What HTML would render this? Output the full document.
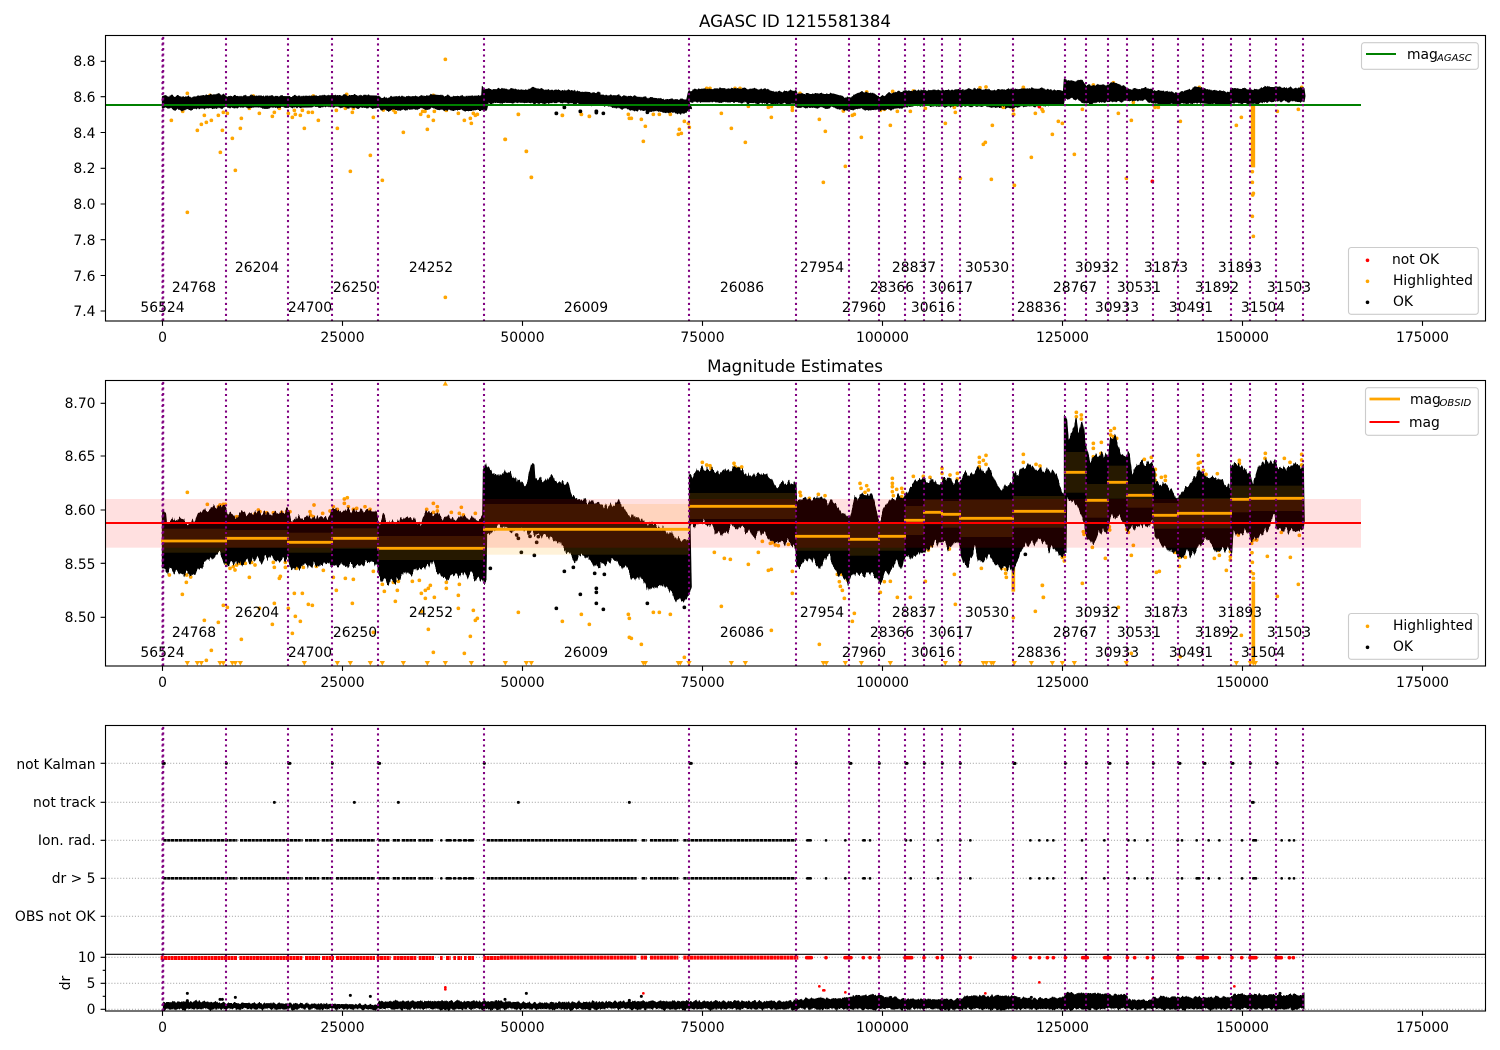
<!DOCTYPE html>
<html>
<head>
<meta charset="utf-8">
<style>
html,body{margin:0;padding:0;background:#fff;width:1500px;height:1050px;overflow:hidden}
svg{display:block}
text{font-family:"DejaVu Sans","Liberation Sans",sans-serif;font-size:13.89px;fill:#000}
.t{font-size:16.67px;text-anchor:middle}
.e{text-anchor:end}
.m{text-anchor:middle}
.sub{font-size:10px;font-style:italic}
.o{fill:none;stroke:orange;stroke-width:11;stroke-linecap:round}
.k{fill:none;stroke:#000;stroke-width:11;stroke-linecap:round}
.r{fill:none;stroke:#f00;stroke-width:11;stroke-linecap:round}
.b{fill:#000;stroke:#000;stroke-width:3;stroke-linejoin:round}
.sp{fill:none;stroke:#000;stroke-width:1.11}
.tk{fill:none;stroke:#000;stroke-width:1.11}
.g{fill:none;stroke:#b0b0b0;stroke-width:1.11;stroke-dasharray:1.11 1.83}
.v{fill:none;stroke:#800080;stroke-width:2.08;stroke-dasharray:2.08 3.44}
.lg{fill:#fff;fill-opacity:.8;stroke:#ccc;stroke-width:1.11}
.row{fill:none;stroke:#000;stroke-width:8;stroke-dasharray:10 1.5}
.pt{fill:none;stroke:#000;stroke-width:8;stroke-linecap:round}
.rrow{fill:none;stroke:#f00;stroke-width:12;stroke-dasharray:9 1}
.tri{fill:orange}
</style>
</head>
<body>
<svg width="1500" height="1050" viewBox="0 0 1500 1050" xmlns="http://www.w3.org/2000/svg">
<rect width="1500" height="1050" fill="#fff"/>
<defs>
<path id="vl" class="v" d="M162.5 286V0M163.2 285V0M226 286V0M288 286V0M332 286V0M378 286V0M484 286V0M689 286V0M796 286V0M849 286V0M879 286V0M905 286V0M924 286V0M942 286V0M960 286V0M1013 286V0M1065 286V0M1086 286V0M1108 286V0M1127 286V0M1153 286V0M1178 286V0M1203 286V0M1231 286V0M1250 286V0M1276 286V0M1303 286V0"/>
<filter id="j1" x="-1%" y="-40%" width="102%" height="180%" color-interpolation-filters="sRGB">
<feTurbulence type="fractalNoise" baseFrequency=".1 .01" numOctaves="3" seed="3"/>
<feColorMatrix values="1 0 0 0 0 0 0 0 0 .5 0 0 0 0 .5 0 0 0 0 1" result="n"/>
<feDisplacementMap in="SourceGraphic" in2="n" scale="12" xChannelSelector="G" yChannelSelector="R"/>
</filter>
<filter id="j2" x="-1%" y="-10%" width="102%" height="120%" color-interpolation-filters="sRGB">
<feTurbulence type="fractalNoise" baseFrequency=".1 .008" numOctaves="3" seed="8"/>
<feColorMatrix values="1 0 0 0 0 0 0 0 0 .5 0 0 0 0 .5 0 0 0 0 1" result="n"/>
<feDisplacementMap in="SourceGraphic" in2="n" scale="45" xChannelSelector="G" yChannelSelector="R"/>
</filter>
<filter id="j3" x="-1%" y="-40%" width="102%" height="180%" color-interpolation-filters="sRGB">
<feTurbulence type="fractalNoise" baseFrequency=".12 .02" numOctaves="3" seed="5"/>
<feColorMatrix values="1 0 0 0 0 0 0 0 0 .5 0 0 0 0 .5 0 0 0 0 1" result="n"/>
<feDisplacementMap in="SourceGraphic" in2="n" scale="14" xChannelSelector="G" yChannelSelector="R"/>
</filter>
</defs>

<!-- ========== AXES 1 ========== -->
<text class="t" x="795" y="27">AGASC ID 1215581384</text>

<g transform="translate(100,30) scale(.33333)">
<path class="o" d="M262 190h.1M1036 88h.1M214 271h.1M248 244h.1M292 301h.1M304 283h.1M313 256h.1M319 277h.1M334 271h.1M355 256h.1M370 247h.1M382 250h.1M367 301h.1M361 367h.1M397 325h.1M421 295h.1M424 265h.1M406 421h.1M448 235h.1M478 250h.1M517 259h.1M523 247h.1M538 235h.1M565 250h.1M577 262h.1M586 253h.1M583 241h.1M601 256h.1M607 241h.1M613 295h.1M625 247h.1M637 247h.1M655 271h.1M712 295h.1M709 241h.1M736 235h.1M757 247h.1M760 235h.1M751 424h.1M811 376h.1M820 262h.1M847 451h.1M886 247h.1M910 307h.1M962 253h.1M968 244h.1M975 244h.1M985 259h.1M982 298h.1M1000 271h.1M1003 244h.1M1039 241h.1M1075 250h.1M1093 271h.1M1111 265h.1M1114 280h.1M1120 250h.1M1126 256h.1M1132 253h.1M1036 802h.1M262 547h.1M1216 328h.1M1255 253h.1M1279 364h.1M1294 442h.1M1387 256h.1M1444 253h.1M1468 259h.1M330 196h.1M460 198h.1M640 198h.1M740 193h.1M1000 196h.1M850 240h.1M880 240h.1"/>
<polygon class="b" filter="url(#j1)" points="187,200 200,198 240,200 280,202 320,195 370,194 380,200 480,198 560,200 640,198 740,196 830,198 850,205 890,200 960,200 1000,195 1060,200 1145,198 1147,170 1160,178 1220,180 1280,182 1297,174 1320,180 1400,182 1500,190 1500,218 1420,215 1165,218 1160,240 1150,240 1040,240 1000,235 960,235 900,240 850,240 835,232 780,232 700,230 560,232 380,232 300,236 240,238 187,232"/>
<path class="k" d="M1369 250h.1M1393 232h.1M1441 244h.1M1489 244h.1"/>
</g>
<g transform="translate(500,30) scale(.33333)">
<path class="o" d="M15 328h.1M55 253h.1M79 364h.1M94 442h.1M187 256h.1M244 253h.1M268 259h.1M385 253h.1M388 265h.1M394 265h.1M424 268h.1M436 289h.1M430 334h.1M460 253h.1M478 253h.1M511 253h.1M553 274h.1M565 280h.1M568 292h.1M538 298h.1M535 313h.1M544 310h.1M664 250h.1M694 295h.1M736 337h.1M814 262h.1M745 229h.1M805 232h.1M814 229h.1M877 241h.1M877 232h.1M958 268h.1M976 304h.1M970 457h.1M1036 409h.1M1030 243h.1M1057 256h.1M1063 253h.1M1084 322h.1M1141 241h.1M1153 238h.1M1171 286h.1M1171 235h.1M1192 244h.1M1231 244h.1M1276 235h.1M1336 280h.1M1363 232h.1M1366 247h.1M1381 445h.1M1450 343h.1M1456 337h.1M1477 286h.1M1474 448h.1M1540 253h.1M1543 466h.1M1540 240h.1M620 175h.1M630 175h.1M705 175h.1M720 175h.1M900 190h.1M1178 184h.1M1100 186h.1M1240 183h.1M1440 173h.1M1458 171h.1"/>
<polygon class="b" filter="url(#j1)" points="0,178 90,180 100,174 130,182 220,185 300,195 400,200 500,208 560,210 566,183 620,176 720,176 800,180 825,187 888,182 892,192 1000,192 1045,205 1080,187 1120,190 1138,203 1170,190 1240,182 1330,182 1440,177 1470,180 1500,182 1560,180 1560,230 1535,232 1400,228 1240,228 1140,240 1080,236 1040,240 1000,232 888,232 885,222 830,220 700,216 566,215 575,235 550,252 500,245 400,240 300,225 200,218 100,218 0,215"/>
<path class="k" d="M169 250h.1M193 232h.1M241 244h.1M289 244h.1M289 248h.1M310 250h.1M442 247h.1"/>
</g>
<g transform="translate(1000,30) scale(.33333)">
<path class="o" d="M70 172h.1M41 253h.1M43 466h.1M94 382h.1M106 250h.1M129 244h.1M126 238h.1M157 313h.1M175 274h.1M187 280h.1M223 373h.1M247 238h.1M280 165h.1M355 250h.1M394 271h.1M379 445h.1M400 217h.1M541 274h.1M475 232h.1M465 232h.1M724 262h.1M709 286h.1M832 244h.1M895 238h.1M598 172h.1M905 172h.1M757 425h.1M757 457h.1M760 490h.1M758 495h.1M757 559h.1M760 619h.1M340 158h.1M10 232h.1"/>
<path d="M759 225V412" fill="none" stroke="orange" stroke-width="13"/>
<polygon class="b" filter="url(#j1)" points="0,182 40,180 70,175 180,182 190,185 193,150 225,155 245,150 258,168 320,165 340,158 380,172 390,180 440,175 459,182 500,185 534,190 590,172 650,182 690,188 692,175 750,178 760,182 800,172 900,175 912,172 915,195 912,215 900,215 830,212 760,220 700,218 692,222 640,222 600,218 534,222 459,220 440,210 380,212 320,215 260,220 225,205 195,205 190,225 120,225 40,232 0,225"/>
<path class="r" d="M118 230h.1M457 454h.1"/>
</g>

<path d="M105.5 105H1361" fill="none" stroke="#008000" stroke-width="2.08"/>
<use href="#vl" transform="translate(0,35.5)"/>

<g>
<text class="m" x="257" y="272">26204</text><text class="m" x="431" y="272">24252</text><text class="m" x="822" y="272">27954</text><text class="m" x="914" y="272">28837</text><text class="m" x="987" y="272">30530</text><text class="m" x="1097" y="272">30932</text><text class="m" x="1166" y="272">31873</text><text class="m" x="1240" y="272">31893</text>
<text class="m" x="194" y="292">24768</text><text class="m" x="355" y="292">26250</text><text class="m" x="742" y="292">26086</text><text class="m" x="892" y="292">28366</text><text class="m" x="951" y="292">30617</text><text class="m" x="1075" y="292">28767</text><text class="m" x="1139" y="292">30531</text><text class="m" x="1217" y="292">31892</text><text class="m" x="1289" y="292">31503</text>
<text class="m" x="162.5" y="312">56524</text><text class="m" x="310" y="312">24700</text><text class="m" x="586" y="312">26009</text><text class="m" x="864" y="312">27960</text><text class="m" x="933" y="312">30616</text><text class="m" x="1039" y="312">28836</text><text class="m" x="1117" y="312">30933</text><text class="m" x="1191" y="312">30491</text><text class="m" x="1263" y="312">31504</text>
</g>

<rect class="sp" x="105.5" y="35.5" width="1380" height="285.5"/>
<path class="tk" d="M162.5 321v4.9M342.5 321v4.9M522.5 321v4.9M702.5 321v4.9M882.5 321v4.9M1062.5 321v4.9M1242.5 321v4.9M1422.5 321v4.9M105.5 61.3h-4.9M105.5 96.7h-4.9M105.5 132.5h-4.9M105.5 168.3h-4.9M105.5 204h-4.9M105.5 239.7h-4.9M105.5 275.5h-4.9M105.5 311h-4.9"/>
<text class="e" x="95.5" y="66">8.8</text><text class="e" x="95.5" y="102">8.6</text><text class="e" x="95.5" y="138">8.4</text><text class="e" x="95.5" y="173">8.2</text><text class="e" x="95.5" y="209">8.0</text><text class="e" x="95.5" y="245">7.8</text><text class="e" x="95.5" y="281">7.6</text><text class="e" x="95.5" y="316">7.4</text>
<text class="m" x="162.5" y="342">0</text><text class="m" x="342.5" y="342">25000</text><text class="m" x="522.5" y="342">50000</text><text class="m" x="702.5" y="342">75000</text><text class="m" x="882.5" y="342">100000</text><text class="m" x="1062.5" y="342">125000</text><text class="m" x="1242.5" y="342">150000</text><text class="m" x="1422.5" y="342">175000</text>

<rect class="lg" x="1361.5" y="42.7" width="116.8" height="26.6" rx="2.8"/>
<path d="M1366 54h30" fill="none" stroke="#008000" stroke-width="2.08"/>
<text x="1407" y="59">mag</text><text class="sub" x="1437" y="61">AGASC</text>

<rect class="lg" x="1348.5" y="247.5" width="129.8" height="66.8" rx="2.8"/>
<circle cx="1367.5" cy="260.3" r="1.8" fill="#f00"/><circle cx="1367.5" cy="281.3" r="1.8" fill="orange"/><circle cx="1367.5" cy="302.3" r="1.8" fill="#000"/>
<text x="1392" y="264">not OK</text><text x="1393" y="285">Highlighted</text><text x="1393" y="306">OK</text>

<!-- ========== AXES 2 ========== -->
<text class="t" x="795" y="372">Magnitude Estimates</text>

<g transform="translate(100,375) scale(.33333)">
<path class="o" d="M262 352h.1M322 388h.1M355 395h.1M360 390h.1M370 388h.1M376 388h.1M208 600h.1M259 622h.1M247 658h.1M272 606h.1M260 600h.1M313 736h.1M355 742h.1M370 691h.1M382 697h.1M334 826h.1M319 856h.1M424 793h.1M517 748h.1M478 700h.1M523 685h.1M448 607h.1M538 610h.1M541 604h.1M520 562h.1M523 577h.1M583 655h.1M607 655h.1M625 688h.1M637 691h.1M586 724h.1M601 739h.1M577 775h.1M565 700h.1M556 562h.1M556 577h.1M589 580h.1M610 577h.1M670 586h.1M649 574h.1M700 607h.1M736 610h.1M760 613h.1M709 646h.1M757 685h.1M820 589h.1M820 772h.1M847 628h.1M853 649h.1M886 679h.1M892 646h.1M895 619h.1M880 622h.1M937 619h.1M958 616h.1M964 655h.1M976 646h.1M985 640h.1M991 631h.1M1003 667h.1M976 670h.1M964 709h.1M985 763h.1M1000 832h.1M1039 640h.1M1039 622h.1M1075 661h.1M1078 628h.1M1075 700h.1M1120 706h.1M1132 730h.1M1126 736h.1M1111 784h.1M1093 835h.1M1255 712h.1M1387 739h.1M1444 718h.1M1468 748h.1M465 417h.1M475 405h.1M480 410h.1M500 413h.1M520 413h.1M545 412h.1M560 410h.1M570 410h.1M410 425h.1M430 423h.1M630 410h.1M632 420h.1M642 390h.1M640 425h.1M668 415h.1M690 408h.1M700 395h.1M712 403h.1M733 385h.1M733 372h.1M742 368h.1M745 395h.1M760 403h.1M770 400h.1M795 395h.1M810 403h.1M1000 385h.1M1012 395h.1M1012 408h.1M1000 412h.1M980 403h.1M1054 412h.1M1084 397h.1M1078 415h.1M1126 415h.1M1090 420h.1M400 575h.1M410 570h.1M390 580h.1M420 565h.1M436 565h.1M455 562h.1M465 570h.1M380 565h.1M405 585h.1"/>
<polygon class="b" filter="url(#j2)" points="187,430 190,410 197,408 200,438 215,442 225,430 235,436 245,428 255,432 265,440 285,438 295,412 305,410 312,415 320,402 330,405 345,398 360,396 378,398 382,428 388,420 410,424 430,420 450,418 470,412 490,416 510,412 530,412 560,408 567,415 572,432 590,428 610,432 625,428 650,428 670,432 690,418 695,408 715,412 740,410 760,410 790,408 810,410 830,415 836,445 850,425 858,445 870,450 885,448 898,425 915,430 925,425 945,430 955,445 965,440 975,420 990,418 1020,420 1030,435 1045,425 1055,438 1070,428 1085,420 1100,430 1125,430 1148,432 1150,285 1156,265 1162,285 1175,295 1190,300 1210,290 1230,290 1240,310 1265,322 1285,318 1295,270 1302,265 1305,310 1320,310 1340,325 1355,305 1365,325 1375,318 1395,318 1405,325 1415,360 1425,368 1440,375 1465,382 1480,378 1500,395 1500,572 1485,570 1470,550 1450,540 1420,555 1410,540 1395,520 1380,500 1360,495 1340,480 1320,480 1300,465 1280,470 1250,470 1230,460 1190,455 1175,470 1160,480 1158,618 1150,618 1130,610 1110,600 1090,598 1070,595 1050,598 1040,612 1025,595 1010,590 1000,558 985,565 960,578 940,590 915,592 900,612 885,618 860,620 840,610 834,600 834,570 830,568 800,565 770,570 750,570 720,565 698,562 695,572 670,572 640,570 620,572 600,575 575,578 568,570 565,555 540,555 500,548 470,555 440,560 410,562 385,560 380,555 370,555 360,530 345,548 320,560 300,570 290,590 270,600 240,595 215,590 195,585 187,575"/>
<path class="k" d="M1369 700h.1M1171 580h.1M1264 532h.1M1303 541h.1M1393 589h.1M1420 577h.1M1441 658h.1M1489 640h.1M1489 652h.1M1489 685h.1M1484 595h.1M1250 480h.1M1255 490h.1M1290 484h.1M1310 502h.1M1315 485h.1"/>
<path class="tri" d="M254 858h16l-8 14zM284 858h16l-8 14zM296 858h16l-8 14zM352 858h16l-8 14zM362 858h16l-8 14zM389 858h16l-8 14zM398 858h16l-8 14zM413 858h16l-8 14zM605 858h16l-8 14zM704 858h16l-8 14zM743 858h16l-8 14zM803 858h16l-8 14zM839 858h16l-8 14zM902 858h16l-8 14zM974 858h16l-8 14zM1028 858h16l-8 14zM1106 858h16l-8 14zM1208 858h16l-8 14zM1271 858h16l-8 14zM1286 858h16l-8 14zM1028 32h16l-8 -14z"/>
</g>
<g transform="translate(600,375) scale(.33333)">
<path class="o" d="M307 262h.1M320 270h.1M330 272h.1M333 280h.1M402 265h.1M405 275h.1M415 280h.1M425 276h.1M600 352h.1M602 362h.1M628 370h.1M655 358h.1M675 362h.1M780 325h.1M783 340h.1M800 332h.1M805 345h.1M795 352h.1M877 310h.1M877 325h.1M877 335h.1M877 350h.1M890 343h.1M880 362h.1M905 340h.1M908 352h.1M905 365h.1M940 304h.1M970 304h.1M990 307h.1M1026 280h.1M1026 295h.1M1030 312h.1M1050 300h.1M1050 316h.1M1072 295h.1M1072 312h.1M1138 262h.1M1138 275h.1M1158 241h.1M1150 256h.1M1158 268h.1M1138 247h.1M1270 238h.1M1270 262h.1M1308 268h.1M1320 273h.1M343 532h.1M373 550h.1M391 553h.1M445 568h.1M475 532h.1M487 499h.1M511 505h.1M526 510h.1M517 503h.1M535 512h.1M565 508h.1M577 500h.1M577 589h.1M505 586h.1M514 583h.1M577 655h.1M85 718h.1M88 730h.1M88 787h.1M94 790h.1M124 808h.1M160 712h.1M178 712h.1M211 718h.1M364 694h.1M514 766h.1M658 808h.1M253 847h.1M712 598h.1M725 598h.1M740 598h.1M742 615h.1M718 620h.1M721 634h.1M727 646h.1M733 670h.1M763 715h.1M757 739h.1M841 610h.1M853 620h.1M871 619h.1M841 652h.1M892 667h.1M931 667h.1M976 619h.1M985 525h.1M995 512h.1M1048 522h.1M1063 598h.1M1066 688h.1M1144 580h.1M1205 580h.1M1217 583h.1M1217 595h.1M1219 607h.1M1240 728h.1M1327 631h.1M1330 667h.1M1306 709h.1"/>
<path d="M1240 578V650" fill="none" stroke="orange" stroke-width="11"/>
<polygon class="b" filter="url(#j2)" points="0,395 20,390 40,392 58,380 70,400 85,420 100,430 120,435 135,440 150,445 170,455 190,465 210,475 230,490 250,495 268,495 268,305 285,292 310,282 340,285 355,290 375,285 400,282 420,280 440,295 470,300 500,300 515,320 525,345 550,325 575,325 588,335 590,380 610,372 640,370 670,372 700,385 720,410 745,435 752,420 765,372 785,360 815,355 825,400 838,440 850,410 870,375 895,368 915,370 920,350 945,325 970,315 1000,315 1015,330 1028,318 1060,318 1078,330 1090,305 1130,285 1170,290 1190,330 1210,345 1238,320 1240,290 1255,305 1265,280 1290,275 1320,285 1350,295 1350,520 1320,490 1300,505 1270,510 1245,570 1240,600 1230,580 1210,575 1190,570 1170,535 1150,560 1135,555 1125,520 1105,570 1090,565 1082,520 1070,500 1045,515 1030,500 1015,500 1000,510 975,520 960,535 940,545 915,540 905,585 890,555 870,590 855,595 838,625 825,600 800,600 775,600 760,590 745,620 715,595 700,565 690,540 660,580 630,545 610,565 590,575 588,520 570,500 530,500 510,495 490,470 460,480 430,465 400,455 370,480 345,465 330,445 300,445 280,450 270,445 274,640 265,660 245,685 225,665 205,640 185,625 165,640 145,640 125,610 100,610 85,590 70,580 55,560 35,545 15,570 0,570"/>
<path class="k" d="M142 685h.1M10 703h.1M253 697h.1M13 598h.1M1276 538h.1"/>
<path class="tri" d="M122 858h16l-8 14zM128 858h16l-8 14zM227 858h16l-8 14zM233 858h16l-8 14zM259 858h16l-8 14zM386 858h16l-8 14zM428 858h16l-8 14zM662 858h16l-8 14zM671 858h16l-8 14zM728 858h16l-8 14zM776 858h16l-8 14zM863 858h16l-8 14zM1028 858h16l-8 14zM1073 858h16l-8 14zM1142 858h16l-8 14zM1151 858h16l-8 14zM1166 858h16l-8 14zM1172 858h16l-8 14zM1235 858h16l-8 14zM1286 858h16l-8 14z"/>
</g>
<g transform="translate(1040,375) scale(.33333)">
<path class="o" d="M109 112h.1M109 125h.1M124 120h.1M124 132h.1M160 205h.1M160 220h.1M184 202h.1M183 235h.1M160 245h.1M212 167h.1M223 160h.1M212 180h.1M220 185h.1M230 190h.1M313 253h.1M334 247h.1M346 283h.1M346 300h.1M346 316h.1M364 307h.1M376 304h.1M376 316h.1M475 241h.1M475 265h.1M475 280h.1M481 262h.1M490 286h.1M498 298h.1M532 296h.1M598 256h.1M598 265h.1M676 235h.1M675 250h.1M733 250h.1M750 262h.1M766 272h.1M785 238h.1M785 255h.1M785 270h.1M7 631h.1M10 667h.1M127 625h.1M132 478h.1M130 470h.1M157 517h.1M196 550h.1M209 465h.1M208 455h.1M260 463h.1M265 472h.1M280 511h.1M274 541h.1M235 697h.1M349 592h.1M358 589h.1M418 574h.1M405 532h.1M418 547h.1M436 547h.1M523 550h.1M538 541h.1M535 526h.1M559 586h.1M571 530h.1M571 545h.1M571 555h.1M595 480h.1M604 781h.1M682 544h.1M751 547h.1M775 628h.1M712 664h.1M724 472h.1M778 481h.1M73 545h.1M73 558h.1M67 547h.1M635 505h.1M640 495h.1M650 495h.1M636 533h.1M637 562h.1M632 590h.1M640 596h.1M640 610h.1M421 845h.1M274 835h.1"/>
<path d="M640 620V862" fill="none" stroke="orange" stroke-width="11"/>
<polygon class="b" filter="url(#j2)" points="30,295 50,305 68,350 73,370 73,125 80,135 85,190 100,165 108,130 115,180 125,135 135,200 150,265 165,240 195,245 205,240 212,195 225,190 240,235 255,245 268,240 275,290 300,265 330,265 345,280 345,322 370,325 395,345 412,375 425,350 450,320 480,290 500,310 530,310 550,325 572,340 572,270 600,270 630,295 640,330 655,280 680,255 705,262 720,280 750,275 790,272 793,440 790,465 760,465 725,470 708,460 705,425 690,440 680,465 655,485 650,490 635,490 615,470 605,475 590,480 580,455 575,530 560,520 525,525 505,490 480,505 462,540 440,530 420,545 395,525 370,510 350,490 338,440 310,455 285,455 262,460 255,440 235,420 210,430 200,470 175,470 160,510 140,480 135,450 120,410 100,375 80,375 78,540 60,540 45,520 30,500"/>
<path class="tri" d="M29 858h16l-8 14zM59 858h16l-8 14zM95 858h16l-8 14zM251 858h16l-8 14zM581 858h16l-8 14zM623 858h16l-8 14zM632 858h16l-8 14zM638 858h16l-8 14z"/>
</g>

<!-- OBSID bands (orange translucent) -->
<g fill="orange" fill-opacity=".15">
<rect x="162" y="528.7" width="64" height="24"/>
<rect x="226" y="530" width="62" height="17.7"/>
<rect x="288" y="532.7" width="44" height="20"/>
<rect x="332" y="528.3" width="46" height="20.4"/>
<rect x="378" y="536" width="106" height="24"/>
<rect x="484" y="504" width="205" height="50.7"/>
<rect x="689" y="493" width="107" height="26"/>
<rect x="796" y="522" width="53" height="28.7"/>
<rect x="849" y="522.7" width="30" height="33"/>
<rect x="879" y="522" width="26" height="28.7"/>
<rect x="905" y="506" width="19" height="29"/>
<rect x="924" y="499.7" width="18" height="24.6"/>
<rect x="942" y="501" width="18" height="26.7"/>
<rect x="960" y="499.7" width="53" height="37.3"/>
<rect x="1013" y="496" width="52" height="31.7"/>
<rect x="1065" y="452" width="21" height="40.7"/>
<rect x="1086" y="484" width="22" height="33.7"/>
<rect x="1108" y="465.7" width="19" height="33"/>
<rect x="1127" y="484" width="26" height="23.7"/>
<rect x="1153" y="503" width="25" height="25.7"/>
<rect x="1178" y="498.3" width="53" height="30"/>
<rect x="1231" y="485.7" width="19" height="26.6"/>
<rect x="1250" y="485.7" width="53" height="25.3"/>
</g>
<rect x="105.5" y="499" width="1255.5" height="48.7" fill="#f00" fill-opacity=".12"/>
<path d="M105.5 523H1361" fill="none" stroke="#f00" stroke-width="2.08"/>
<path fill="none" stroke="orange" stroke-width="2.78" d="M161 541H227M225 538.3H289M287 542.3H333M331 538.3H379M377 548.3H485M483 529.3H690M688 506.3H797M795 536.3H850M848 539.3H880M878 536.3H906M904 520.3H925M923 512.3H943M941 514.3H961M959 518.3H1014M1012 511.3H1066M1064 472.3H1087M1085 500.3H1109M1107 482.3H1128M1126 495.3H1154M1152 515.3H1179M1177 513.3H1232M1230 499.3H1251M1249 498.3H1304"/>
<use href="#vl" transform="translate(0,380.5)"/>

<g>
<text class="m" x="257" y="617">26204</text><text class="m" x="431" y="617">24252</text><text class="m" x="822" y="617">27954</text><text class="m" x="914" y="617">28837</text><text class="m" x="987" y="617">30530</text><text class="m" x="1097" y="617">30932</text><text class="m" x="1166" y="617">31873</text><text class="m" x="1240" y="617">31893</text>
<text class="m" x="194" y="637">24768</text><text class="m" x="355" y="637">26250</text><text class="m" x="742" y="637">26086</text><text class="m" x="892" y="637">28366</text><text class="m" x="951" y="637">30617</text><text class="m" x="1075" y="637">28767</text><text class="m" x="1139" y="637">30531</text><text class="m" x="1217" y="637">31892</text><text class="m" x="1289" y="637">31503</text>
<text class="m" x="162.5" y="657">56524</text><text class="m" x="310" y="657">24700</text><text class="m" x="586" y="657">26009</text><text class="m" x="864" y="657">27960</text><text class="m" x="933" y="657">30616</text><text class="m" x="1039" y="657">28836</text><text class="m" x="1117" y="657">30933</text><text class="m" x="1191" y="657">30491</text><text class="m" x="1263" y="657">31504</text>
</g>

<rect class="sp" x="105.5" y="380.5" width="1380" height="285.5"/>
<path class="tk" d="M162.5 666v4.9M342.5 666v4.9M522.5 666v4.9M702.5 666v4.9M882.5 666v4.9M1062.5 666v4.9M1242.5 666v4.9M1422.5 666v4.9M105.5 403.3h-4.9M105.5 456h-4.9M105.5 510h-4.9M105.5 563.3h-4.9M105.5 617.3h-4.9"/>
<text class="e" x="95.5" y="408">8.70</text><text class="e" x="95.5" y="461">8.65</text><text class="e" x="95.5" y="515">8.60</text><text class="e" x="95.5" y="569">8.55</text><text class="e" x="95.5" y="622">8.50</text>
<text class="m" x="162.5" y="687">0</text><text class="m" x="342.5" y="687">25000</text><text class="m" x="522.5" y="687">50000</text><text class="m" x="702.5" y="687">75000</text><text class="m" x="882.5" y="687">100000</text><text class="m" x="1062.5" y="687">125000</text><text class="m" x="1242.5" y="687">150000</text><text class="m" x="1422.5" y="687">175000</text>

<rect class="lg" x="1365.5" y="387.7" width="112.8" height="47.6" rx="2.8"/>
<path d="M1369.5 399h30.5" fill="none" stroke="orange" stroke-width="2.78"/>
<path d="M1369.5 422h30" fill="none" stroke="#f00" stroke-width="2.08"/>
<text x="1410" y="404">mag</text><text class="sub" x="1439.5" y="406">OBSID</text><text x="1409" y="427">mag</text>

<rect class="lg" x="1348.5" y="613.5" width="129.8" height="45.8" rx="2.8"/>
<circle cx="1367.5" cy="626.3" r="1.8" fill="orange"/><circle cx="1367.5" cy="647.3" r="1.8" fill="#000"/>
<text x="1393" y="630">Highlighted</text><text x="1393" y="651">OK</text>

<!-- ========== AXES 3 ========== -->
<path class="g" d="M105.5 763.3H1485.5M105.5 802.3H1485.5M105.5 840.3H1485.5M105.5 878.3H1485.5M105.5 916.3H1485.5M105.5 957.3H1485.5M105.5 983.3H1485.5M105.5 1009.3H1485.5"/>

<g transform="translate(0,720) scale(.33333)">
<path class="row" d="M490 361H712M720 361H908M915 361H958M965 361H1000M1008 361H1125M1135 361H1170M1178 361H1200M1205 361H1248M1255 361H1300M1460 361H1500M490 475H712M720 475H908M915 475H958M965 475H1000M1008 475H1125M1135 475H1170M1178 475H1200M1205 475H1248M1255 475H1300M1460 475H1500"/>
<path class="pt" d="M1324 361h.1M1340 361h12M1362 361h4M1376 361h6M1392 361h6M1407 361h12M1324 475h.1M1340 475h12M1362 475h4M1376 475h6M1392 475h6M1407 475h12"/>
<path class="rrow" d="M482 714H712M718 714H908M915 714H960M966 714H1002M1008 714H1125M1130 714H1172M1180 714H1250M1256 714H1302M1320 714h8M1338 714h14M1360 714h8M1372 714h14M1392 714h8M1404 714h18M1450 714H1500"/>
<polygon class="b" filter="url(#j3)" points="490,848 600,845 680,850 900,852 1130,855 1140,845 1500,845 1500,866 490,866"/>
<path class="k" style="stroke-width:9" d="M489 130h4M679 130h.1M866 130h4M997 130h.1M1136 130h3M1453 130h.1M823 247h.1M1063 247h.1M1195 247h.1M562 820h.1M706 832h.1M1051 826h.1M1111 829h.1M660 838h.1M667 838h.1M562 842h.1"/>
<path class="r" style="stroke-width:8" d="M1336 802h.1M1336 808h.1"/>
</g>
<g transform="translate(500,720) scale(.33333)">
<path class="row" d="M0 361H410M425 361H440M450 361H535M550 361H888M0 475H410M425 475H440M450 475H535M550 475H888"/>
<path class="pt" d="M922 361h10M978 361h.1M1036 361h.1M1090 361h4M1110 361h.1M1218 361h.1M1232 361h.1M1314 361h.1M1381 361h.1M1411 361h.1M922 475h10M978 475h.1M1036 475h.1M1090 475h4M1110 475h.1M1232 475h.1M1314 475h.1M1381 475h.1M1411 475h.1"/>
<path class="rrow" d="M0 713H410M422 713H441M450 713H535M550 713H895"/>
<path class="r" d="M920 713h14M978 713h.1M1035 713h18M1090 713h.1M1110 713h.1M1137 713h.1M1215 713h20M1272 713h.1M1312 713h.1M1327 713h.1M1381 713h.1M1411 713h.1M1542 713h.1"/>
<polygon class="b" filter="url(#j3)" points="0,845 100,850 400,845 880,845 890,838 1040,835 1070,826 1100,828 1140,826 1200,838 1380,840 1395,828 1560,830 1560,866 0,866"/>
<path class="k" style="stroke-width:9" d="M570 130h4M889 130h.1M1050 130h3M1138 130h.1M1218 130h3M1273 130h.1M1327 130h.1M1381 130h.1M1542 130h3M55 247h.1M388 247h.1M79 820h.1M15 838h.1M388 841h.1M424 829h.1M1172 832h.1"/>
<path class="r" style="stroke-width:8" d="M430 820h.1M958 799h.1M970 811h3M1036 817h.1M1456 820h.1"/>
</g>
<g transform="translate(1000,720) scale(.33333)">
<path class="pt" d="M91 361h.1M118 361h.1M142 361h.1M160 361h.1M246 361h.1M313 361h.1M385 361h.1M404 361h.1M442 361h.1M533 361h.1M546 361h.1M590 361h.1M626 361h.1M658 361h.1M726 361h.1M760 361h8M845 361h.1M868 361h.1M882 361h.1M91 475h.1M118 475h.1M142 475h.1M160 475h.1M246 475h.1M313 475h.1M385 475h.1M404 475h.1M442 475h.1M457 475h.1M533 475h.1M546 475h.1M590 475h8M626 475h.1M658 475h.1M726 475h.1M760 475h8M845 475h.1M868 475h.1M882 475h.1"/>
<path class="r" d="M40 713h5M91 713h.1M118 713h.1M142 713h.1M160 713h.1M196 713h.1M248 713h14M314 713h16M382 713h.1M404 713h.1M442 713h.1M460 713h.1M533 713h14M592 713h30M658 713h.1M696 713h.1M725 713h.1M750 713h18M828 713h16M868 713h.1M880 713h.1"/>
<polygon class="b" filter="url(#j3)" points="0,835 190,835 200,820 380,825 385,840 455,842 460,832 690,832 705,825 905,825 912,820 912,866 0,866"/>
<path class="k" style="stroke-width:9" d="M42 130h3M196 130h.1M259 130h.1M327 130h3M382 130h.1M460 130h.1M537 130h3M612 130h3M696 130h3M751 130h.1M831 130h.1M757 247h3M94 832h.1M840 820h.1"/>
<path class="r" style="stroke-width:8" d="M118 787h.1M457 775h.1M703 799h.1"/>
</g>

<use href="#vl" transform="translate(0,725.5)"/>
<path d="M105.5 954.3H1485.5" fill="none" stroke="#000" stroke-width="1.11"/>
<rect class="sp" x="105.5" y="725.5" width="1380" height="285.5"/>
<path class="tk" d="M162.5 1011v4.9M342.5 1011v4.9M522.5 1011v4.9M702.5 1011v4.9M882.5 1011v4.9M1062.5 1011v4.9M1242.5 1011v4.9M1422.5 1011v4.9M105.5 763.3h-4.9M105.5 802.3h-4.9M105.5 840.3h-4.9M105.5 878.3h-4.9M105.5 916.3h-4.9M105.5 957.3h-4.9M105.5 983.3h-4.9M105.5 1009.3h-4.9M105.5 970.3h-2.8M105.5 996.3h-2.8"/>
<text class="e" x="95.5" y="769">not Kalman</text><text class="e" x="95.5" y="807">not track</text><text class="e" x="95.5" y="845">Ion. rad.</text><text class="e" x="95.5" y="883">dr &gt; 5</text><text class="e" x="95.5" y="921">OBS not OK</text>
<text class="e" x="95.5" y="962">10</text><text class="e" x="95.5" y="988">5</text><text class="e" x="95.5" y="1014">0</text>
<text class="m" transform="translate(70,983) rotate(-90)" x="0" y="0">dr</text>
<text class="m" x="162.5" y="1032">0</text><text class="m" x="342.5" y="1032">25000</text><text class="m" x="522.5" y="1032">50000</text><text class="m" x="702.5" y="1032">75000</text><text class="m" x="882.5" y="1032">100000</text><text class="m" x="1062.5" y="1032">125000</text><text class="m" x="1242.5" y="1032">150000</text><text class="m" x="1422.5" y="1032">175000</text>
</svg>
</body>
</html>
